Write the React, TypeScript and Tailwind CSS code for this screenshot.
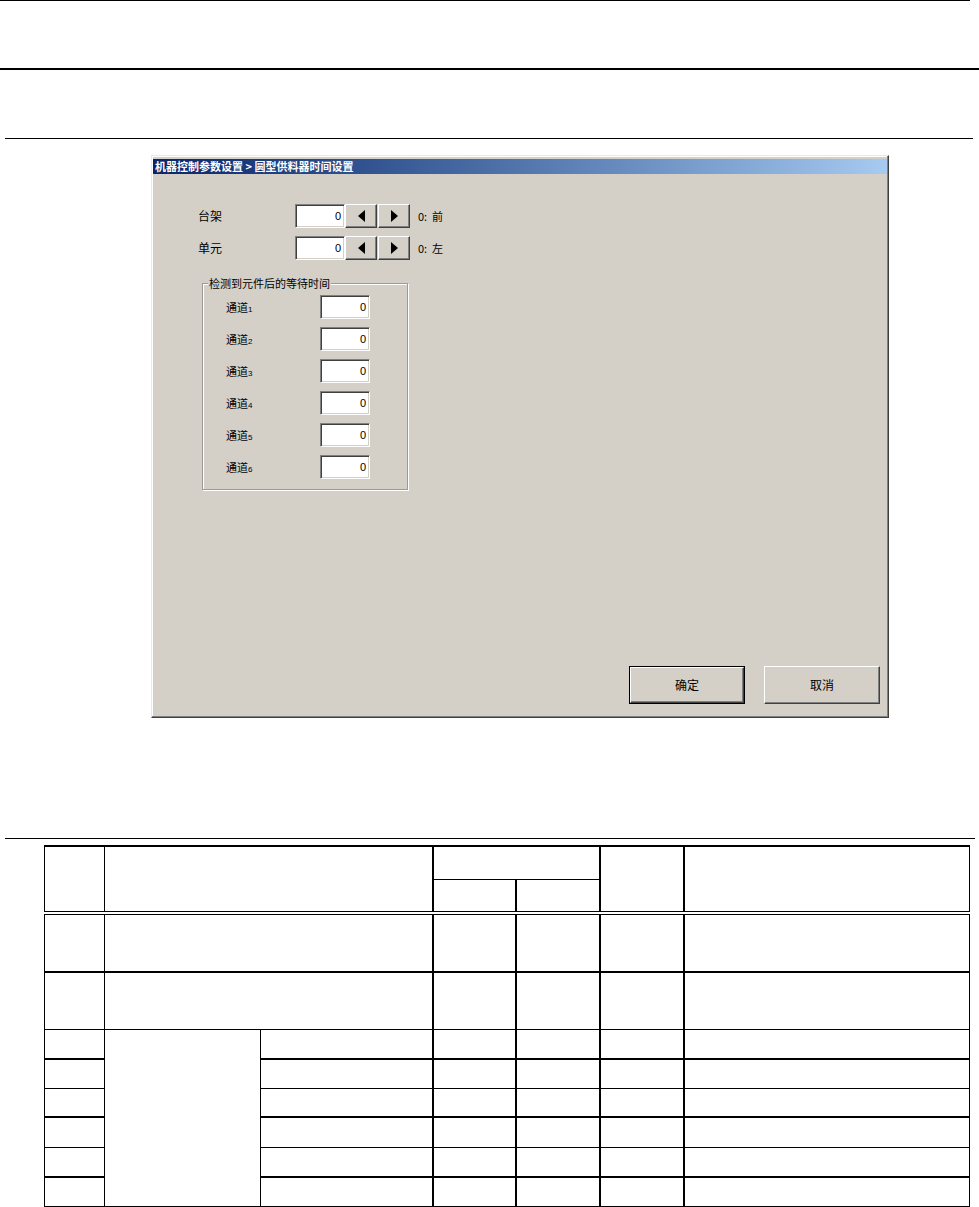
import React from "react";

const cjk = { fontFamily: '"Noto Sans CJK SC", "Liberation Sans", sans-serif' };

function Triangle({ dir }: { dir: "left" | "right" }) {
  return (
    <svg width="7" height="12" viewBox="0 0 7 12">
      {dir === "left" ? (
        <polygon points="7,0 7,12 0,6" fill="#000" />
      ) : (
        <polygon points="0,0 0,12 7,6" fill="#000" />
      )}
    </svg>
  );
}

function NumInput({ value }: { value: string }) {
  return (
    <div className="w-[50px] h-[24px] bg-white border border-t-[#808080] border-l-[#808080] border-r-white border-b-white shadow-[inset_1px_1px_0_#404040,inset_-1px_-1px_0_#d4d0c8] flex items-center justify-end pr-[3px] text-[11px] text-black font-['Liberation_Sans']">
      {value}
    </div>
  );
}

function SpinButton({ dir }: { dir: "left" | "right" }) {
  return (
    <div className="w-[32px] h-[24px] bg-[#d4d0c8] border border-t-white border-l-white border-r-[#404040] border-b-[#404040] shadow-[inset_-1px_-1px_0_#808080] flex items-center justify-center">
      <Triangle dir={dir} />
    </div>
  );
}

function FieldRow({ label, note }: { label: string; note: string }) {
  return (
    <div className="flex items-center h-[24px]">
      <div className="w-[142px] pl-[45px] text-[12px]">{label}</div>
      <NumInput value="0" />
      <SpinButton dir="left" />
      <div className="ml-px">
        <SpinButton dir="right" />
      </div>
      <div className="ml-[8px] text-[11px] whitespace-pre">{note}</div>
    </div>
  );
}

const channels = ["1", "2", "3", "4", "5", "6"];

const td = "border border-black p-0";

export default function App() {
  return (
    <div className="w-[979px] h-[1207px] bg-white text-black overflow-hidden" style={cjk}>
      <div className="h-px w-[970px] bg-black" />
      <div className="h-[67px]" />
      <div className="h-[2px] bg-black" />
      <div className="h-[68px]" />
      <div className="h-px ml-[5px] w-[968px] bg-black" />

      {/* dialog */}
      <div className="ml-[151px] mt-[16px] w-[738px] h-[563px] bg-[#d4d0c8] border border-t-[#ece9e2] border-l-[#ece9e2] border-r-[#404040] border-b-[#404040] shadow-[inset_-1px_-1px_0_#808080,inset_1px_1px_0_#fff] p-px pt-[3px] flex flex-col">
        <div className="h-[15px] bg-gradient-to-r from-[#0a246a] to-[#a6caf0] flex items-center pl-[2px] text-white font-bold text-[11px] leading-none whitespace-pre">
          机器控制参数设置 &gt; 圆型供料器时间设置
        </div>

        <div className="flex-1 flex flex-col">
          <div className="mt-[30px] flex flex-col gap-[8px]">
            <FieldRow label="台架" note="0:  前" />
            <FieldRow label="单元" note="0:  左" />
          </div>

          <fieldset className="mt-[16px] ml-[49px] w-[206px] border border-[#9c9a94] shadow-[inset_1px_1px_0_#fff,1px_1px_0_#fff] pb-[10px]">
            <legend className="ml-[5px] px-[1px] bg-[#d4d0c8] text-[11px] leading-[14px]">
              检测到元件后的等待时间
            </legend>
            <div className="mt-[5px] flex flex-col gap-[8px]">
              {channels.map((c) => (
                <div key={c} className="flex items-center h-[24px]">
                  <div className="w-[117px] pl-[23px] text-[11px]">
                    通道<span className="text-[8px] font-['Liberation_Sans']">{c}</span>
                  </div>
                  <NumInput value="0" />
                </div>
              ))}
            </div>
          </fieldset>

          <div className="mt-auto flex justify-end gap-[19px] pr-[7px] pb-[12px]">
            <div className="w-[116px] h-[38px] border border-black">
              <div className="w-full h-full border border-t-white border-l-white border-r-[#404040] border-b-[#404040] shadow-[inset_-1px_-1px_0_#808080] flex items-center justify-center text-[12px]">
                确定
              </div>
            </div>
            <div className="w-[116px] h-[38px] border border-t-white border-l-white border-r-[#404040] border-b-[#404040] shadow-[inset_-1px_-1px_0_#808080] flex items-center justify-center text-[12px]">
              取消
            </div>
          </div>
        </div>
      </div>

      <div className="mt-[120px] h-px ml-[5px] w-[970px] bg-black" />

      <table className="mt-[6px] ml-[44px] w-[925px] table-fixed border-collapse">
        <colgroup>
          <col className="w-[60px]" />
          <col className="w-[156px]" />
          <col className="w-[172px]" />
          <col className="w-[83px]" />
          <col className="w-[84px]" />
          <col className="w-[84px]" />
          <col className="w-[286px]" />
        </colgroup>
        <tbody>
          <tr className="h-[33px]">
            <td rowSpan={2} className={`${td} border-t-2 border-b-4 border-double`} />
            <td colSpan={2} rowSpan={2} className={`${td} border-t-2 border-r-2 border-b-4 border-double`} />
            <td colSpan={2} className={`${td} border-t-2 border-r-2`} />
            <td rowSpan={2} className={`${td} border-t-2 border-r-2 border-b-4 border-double`} />
            <td rowSpan={2} className={`${td} border-t-2 border-b-4 border-double`} />
          </tr>
          <tr className="h-[34px]">
            <td className={`${td} border-r-2 border-b-4 border-double`} />
            <td className={`${td} border-r-2 border-b-4 border-double`} />
          </tr>
          <tr className="h-[59px]">
            <td className={`${td} border-b-2`} />
            <td colSpan={2} className={`${td} border-b-2 border-r-2`} />
            <td className={`${td} border-b-2 border-r-2`} />
            <td className={`${td} border-b-2 border-r-2`} />
            <td className={`${td} border-b-2 border-r-2`} />
            <td className={`${td} border-b-2`} />
          </tr>
          <tr className="h-[57px]">
            <td className={td} />
            <td colSpan={2} className={`${td} border-r-2`} />
            <td className={`${td} border-r-2`} />
            <td className={`${td} border-r-2`} />
            <td className={`${td} border-r-2`} />
            <td className={td} />
          </tr>
          {[30, 29, 29, 30, 30, 29].map((h, i) => {
            const b = i % 2 === 0 ? "border-b-2" : "";
            return (
              <tr key={i} style={{ height: h }}>
                <td className={`${td} ${b}`} />
                {i === 0 && <td rowSpan={6} className={td} />}
                <td className={`${td} ${b} border-r-2`} />
                <td className={`${td} ${b} border-r-2`} />
                <td className={`${td} ${b} border-r-2`} />
                <td className={`${td} ${b} border-r-2`} />
                <td className={`${td} ${b}`} />
              </tr>
            );
          })}
        </tbody>
      </table>
    </div>
  );
}
